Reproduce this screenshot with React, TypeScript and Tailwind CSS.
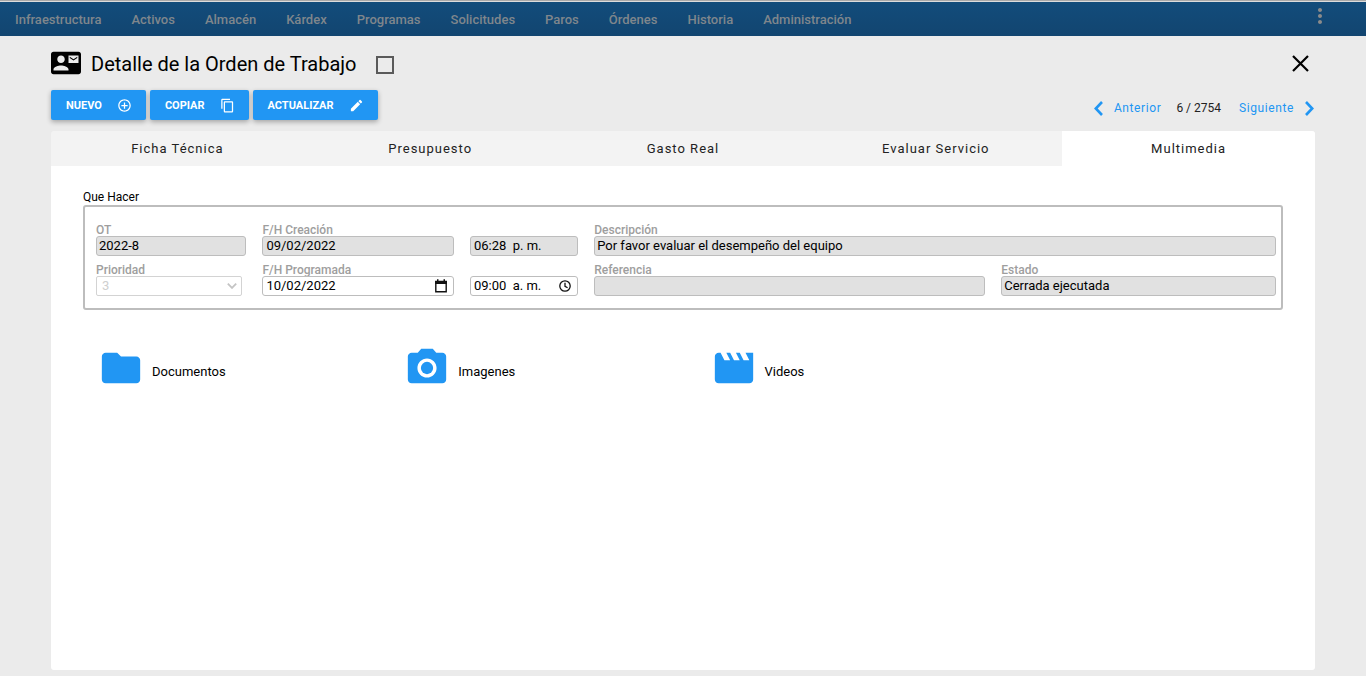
import { useState } from 'react';
import type { ReactNode } from 'react';
import {
  MdContactMail,
  MdContentCopy,
  MdControlPoint,
  MdEdit,
  MdFolder,
  MdMoreVert,
  MdMovie,
  MdPhotoCamera,
} from 'react-icons/md';

const menu = [
  'Infraestructura',
  'Activos',
  'Almacén',
  'Kárdex',
  'Programas',
  'Solicitudes',
  'Paros',
  'Órdenes',
  'Historia',
  'Administración',
];

const tabs = ['Ficha Técnica', 'Presupuesto', 'Gasto Real', 'Evaluar Servicio', 'Multimedia'];

const actions = [
  { label: 'Nuevo', icon: MdControlPoint },
  { label: 'Copiar', icon: MdContentCopy },
  { label: 'Actualizar', icon: MdEdit },
];

const media = [
  { label: 'Documentos', icon: MdFolder },
  { label: 'Imagenes', icon: MdPhotoCamera },
  { label: 'Videos', icon: MdMovie },
];

const inputClass =
  'block h-5 w-full rounded-[3px] border border-[#bdbdbd] px-[2px] pb-[2px] text-[13px] leading-4 text-black outline-none';

const labelClass = 'text-xs leading-3 font-medium text-[#9e9e9e]';

function Chevron({ d }: { d: string }) {
  return (
    <svg viewBox="0 0 9 15" className="h-[15px] w-[9px]" fill="none" stroke="currentColor" strokeWidth="2.6">
      <path d={d} />
    </svg>
  );
}

function CloseIcon() {
  return (
    <svg viewBox="0 0 17 17" className="size-[17px]" fill="none" stroke="currentColor" strokeWidth="2.2">
      <path d="M1 1L16 16M16 1L1 16" />
    </svg>
  );
}

function CalendarIcon() {
  return (
    <svg viewBox="0 0 12 14" className="h-[14px] w-3">
      <path d="M.8 2.500h10.400v10.200H.8z" fill="none" stroke="#111" strokeWidth="1.400" />
      <path d="M.1 2h11.800v3H.1zM2 .3h1.500v2H2zM8.500.3H10v2H8.500z" fill="#111" />
    </svg>
  );
}

function ClockIcon() {
  return (
    <svg viewBox="0 0 12 12" className="size-3" fill="none" stroke="#111" strokeWidth="1.300">
      <circle cx="6" cy="6" r="5.200" />
      <path d="M6 2.800v3.500l2.600 1.500" />
    </svg>
  );
}

type FieldProps = {
  id: string;
  label?: string;
  aria?: string;
  value: string;
  editable?: boolean;
  wide?: boolean;
  padded?: boolean;
  icon?: ReactNode;
};

function Field({ id, label, aria, value, editable, wide, padded, icon }: FieldProps) {
  return (
    <div className={`flex min-w-0 flex-col justify-end ${wide ? 'col-span-2' : ''}`}>
      {label && (
        <label htmlFor={id} className={labelClass}>
          {label}
        </label>
      )}
      <div className="relative">
        <input
          id={id}
          type="text"
          aria-label={aria}
          defaultValue={value}
          readOnly={!editable}
          className={`${inputClass} ${editable ? 'bg-white' : 'bg-[#e1e1e1]'} ${padded ? 'pl-[3px]' : ''}`}
        />
        {icon && (
          <span className="pointer-events-none absolute inset-y-0 right-[7px] flex items-center pb-px">{icon}</span>
        )}
      </div>
    </div>
  );
}

export default function App() {
  const [activeTab, setActiveTab] = useState('Multimedia');

  return (
    <div className="flex min-h-screen flex-col bg-[#ebebeb] pb-[6px] font-['Roboto',sans-serif] text-black">
      <header className="border-t border-[#a9a9a9]">
        <nav className="flex h-[35px] items-center border-t border-[#dcdcdc] bg-linear-to-b from-[#124c7b] to-[#124570] pt-[2px] pr-[34px]">
          {menu.map((item) => (
            <a key={item} href="#" className="px-[15px] text-[13px] leading-5 font-medium text-[#7f868c]">
              {item}
            </a>
          ))}
          <button type="button" aria-label="Más opciones" className="mb-2 ml-auto text-[#8b8b8b]">
            <MdMoreVert className="size-6" />
          </button>
        </nav>
      </header>

      <main className="mx-[51px] flex flex-1 flex-col">
        <div className="mt-3 flex h-[30px] items-center">
          <MdContactMail className="size-[30px]" />
          <h1 className="ml-[10px] pt-[2px] text-xl leading-7">Detalle de la Orden de Trabajo</h1>
          <input
            type="checkbox"
            aria-label="Seleccionar orden"
            className="mt-1 ml-5 size-[18px] appearance-none border-2 border-[#5a5a5a] checked:bg-[#5a5a5a]"
          />
          <button type="button" aria-label="Cerrar" className="mr-[6px] ml-auto">
            <CloseIcon />
          </button>
        </div>

        <div className="mt-3 flex items-start justify-between">
          <div className="flex gap-1">
            {actions.map(({ label, icon: Icon }) => (
              <button
                key={label}
                type="button"
                className="flex h-[30px] items-center gap-[15px] rounded-xs bg-[#2196f3] pr-[14px] pl-[15px] text-[11px] leading-4 font-bold text-white uppercase shadow-[0_2px_5px_rgba(0,0,0,0.3)]"
              >
                <span className="pt-px">{label}</span>
                <Icon className="size-[15px]" />
              </button>
            ))}
          </div>
          <div className="mt-2 flex h-5 items-center pr-px text-xs">
            <button type="button" className="flex items-center gap-[11px] tracking-wider text-[#2196f3]">
              <Chevron d="M8 1L1.800 7.500L8 14" />
              Anterior
            </button>
            <span className="mr-[18px] ml-[15px] text-[#222]">6 / 2754</span>
            <button type="button" className="flex items-center gap-[11px] tracking-wider text-[#2196f3]">
              Siguiente
              <Chevron d="M1 1L7.200 7.500L1 14" />
            </button>
          </div>
        </div>

        <div role="tablist" className="mt-[11px] grid grid-cols-5 overflow-hidden rounded-t-[3px] bg-[#f3f3f3]">
          {tabs.map((tab) => (
            <button
              key={tab}
              type="button"
              role="tab"
              aria-selected={tab === activeTab}
              onClick={() => setActiveTab(tab)}
              className={`h-[35px] text-[13px] tracking-[1px] text-[#222] ${tab === activeTab ? 'bg-white' : ''}`}
            >
              {tab}
            </button>
          ))}
        </div>

        <div className="flex-1 rounded-b-[3px] bg-white pt-[23px]">
          <section className="mx-8" aria-labelledby="que-hacer">
            <h2 id="que-hacer" className="text-xs leading-4">
              Que Hacer
            </h2>
            <div className="grid grid-cols-[150fr_191fr_108fr_390fr_274fr] gap-x-4 gap-y-2 rounded-[3px] border-2 border-[#bdbdbd] pt-[17px] pr-[5px] pb-3 pl-[11px]">
              <Field id="ot" label="OT" value="2022-8" />
              <Field id="fecha-creacion" label="F/H Creación" value="09/02/2022" padded />
              <Field id="hora-creacion" aria="Hora de creación" value="06:28  p. m." padded />
              <Field id="descripcion" label="Descripción" value="Por favor evaluar el desempeño del equipo" wide />

              <div className="flex min-w-0 flex-col pr-1">
                <label htmlFor="prioridad" className={labelClass}>
                  Prioridad
                </label>
                <div className="relative">
                  <select
                    id="prioridad"
                    disabled
                    className="block h-5 w-full appearance-none rounded-xs border border-[#d3d3d3] bg-white pl-[5px] text-[13px] leading-[18px] text-[#cfcfcf]"
                  >
                    <option>3</option>
                  </select>
                  <svg
                    viewBox="0 0 10 6"
                    className="pointer-events-none absolute top-[7px] right-[5px] h-[6px] w-[10px]"
                    fill="none"
                    stroke="#c4c4c4"
                    strokeWidth="1.800"
                  >
                    <path d="M.8.7L5 4.900L9.200.7" />
                  </svg>
                </div>
              </div>
              <Field id="fecha-programada" label="F/H Programada" value="10/02/2022" editable padded icon={<CalendarIcon />} />
              <Field id="hora-programada" aria="Hora programada" value="09:00  a. m." editable padded icon={<ClockIcon />} />
              <Field id="referencia" label="Referencia" value="" />
              <Field id="estado" label="Estado" value="Cerrada ejecutada" />
            </div>
          </section>

          <div className="mt-[35px] grid grid-cols-4 pl-[39px]">
            {media.map(({ label, icon: Icon }) => (
              <a key={label} href="#" className="flex items-center gap-2 pl-2 text-[13px] leading-5">
                <Icon className="size-[46px] text-[#2196f3]" />
                <span className="pt-2">{label}</span>
              </a>
            ))}
          </div>
        </div>
      </main>
    </div>
  );
}
